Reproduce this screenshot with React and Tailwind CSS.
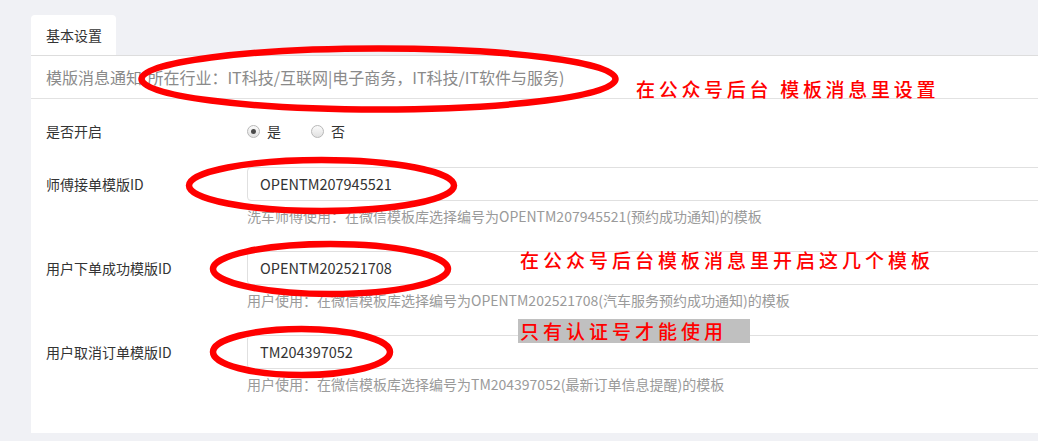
import React from 'react';

const templateRows = [
  {
    label: '师傅接单模版ID',
    value: 'OPENTM207945521',
    help: '洗车师傅使用：在微信模板库选择编号为OPENTM207945521(预约成功通知)的模板',
  },
  {
    label: '用户下单成功模版ID',
    value: 'OPENTM202521708',
    help: '用户使用：在微信模板库选择编号为OPENTM202521708(汽车服务预约成功通知)的模板',
  },
  {
    label: '用户取消订单模版ID',
    value: 'TM204397052',
    help: '用户使用：在微信模板库选择编号为TM204397052(最新订单信息提醒)的模板',
  },
];

function Radio({ checked, label }) {
  return (
    <label className="flex items-center gap-[7px]">
      <span className="w-[13px] h-[13px] rounded-full border border-[#b8b8b8] bg-linear-to-b from-[#fbfbfb] to-[#e1e1e1] flex items-center justify-center">
        {checked && <span className="w-[5px] h-[5px] rounded-full bg-[#4a4a4a]" />}
      </span>
      <span>{label}</span>
    </label>
  );
}

// hand-drawn red marks on top of the screenshot
function Annotations() {
  return (
    <>
      <svg className="absolute left-0 top-0 pointer-events-none" width="1038" height="441">
        <g fill="none" stroke="#ff0000" strokeWidth="6.5">
          <ellipse cx="378.5" cy="79" rx="237" ry="30.5" />
          <ellipse cx="321.5" cy="185.5" rx="132.5" ry="25.5" />
          <ellipse cx="330.5" cy="269" rx="117.5" ry="25" />
          <ellipse cx="301.5" cy="352" rx="88.5" ry="23" />
        </g>
      </svg>
      <div className="absolute left-[636px] top-[77px] text-[19px] leading-[24px] tracking-[3.7px] font-medium text-[#ff0000] whitespace-nowrap">
        在公众号后台 模板消息里设置
      </div>
      <div className="absolute left-[520px] top-[248px] text-[19px] leading-[24px] tracking-[4px] font-medium text-[#ff0000] whitespace-nowrap">
        在公众号后台模板消息里开启这几个模板
      </div>
      <div className="absolute left-[518px] top-[319px] w-[232px] h-[24px] bg-[#c0c0c0] pl-[2px] text-[19px] leading-[24px] tracking-[4px] font-medium text-[#ff0000] whitespace-nowrap">
        只有认证号才能使用
      </div>
    </>
  );
}

export default function App() {
  return (
    <div
      className="relative w-[1038px] h-[441px] overflow-hidden bg-[#f0f1f5]"
      style={{ fontFamily: '"Noto Sans CJK SC", "Noto Sans", sans-serif' }}
    >
      <div className="w-[1100px] pl-[31px] pt-[15px]">
        {/* tab */}
        <div className="w-[85px] h-[40px] bg-white rounded-t-[4px] pl-[15px] text-[14px] leading-[40px] text-[#333]">
          基本设置
        </div>

        <div className="bg-white border-t border-[#dddddd]">
          <div className="h-[43px] pl-[15px] border-b border-[#e2e2e2] text-[16px] leading-[42px] text-[#8a8a8a]">
            模版消息通知(所在行业：IT科技/互联网|电子商务，IT科技/IT软件与服务)
          </div>

          <div className="pt-[15px] pb-[39px] text-[14px] text-[#333]">
            <div className="flex items-center h-[34px] mb-[19px]">
              <div className="w-[216px] pl-[15px]">是否开启</div>
              <div className="flex items-center gap-[30px]">
                <Radio checked label="是" />
                <Radio label="否" />
              </div>
            </div>

            {templateRows.map((row) => (
              <div key={row.label} className="flex mb-[25px] last:mb-0">
                <div className="w-[216px] pl-[15px] h-[34px] leading-[34px] shrink-0">{row.label}</div>
                <div className="flex-1">
                  <div className="h-[34px] border border-[#e0e0e0] rounded-l-[4px] pl-[12px] leading-[32px] text-[14.5px] text-[#333]">
                    {row.value}
                  </div>
                  <div className="mt-[5px] h-[20px] leading-[20px] text-[#9a9a9a]">{row.help}</div>
                </div>
              </div>
            ))}
          </div>
        </div>
      </div>

      <Annotations />
    </div>
  );
}
